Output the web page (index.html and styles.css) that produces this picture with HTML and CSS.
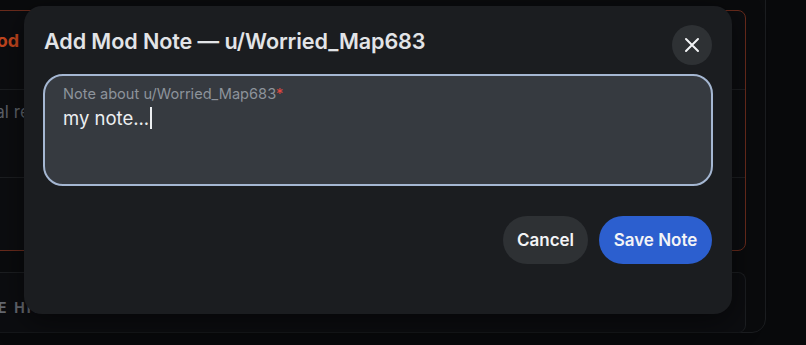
FILE: index.html
```html
<!DOCTYPE html>
<html lang="en">
<head>
<meta charset="utf-8">
<title>Add Mod Note</title>
<link rel="stylesheet" href="styles.css">
</head>
<body>
<div class="panel">
  <section class="card card-active">
    <div class="card-head">Mod Note</div>
    <div class="card-row">Optional reason</div>
    <div class="card-row card-row-last"></div>
  </section>
  <section class="card card-history">
    <div class="history-title">NOTE HISTORY</div>
  </section>
</div>

<div class="modal" role="dialog" aria-label="Add Mod Note">
  <div class="modal-head">
    <h2 class="modal-title">Add Mod Note — u/Worried_Map683</h2>
    <button class="close-btn" aria-label="Close">
      <svg width="18" height="18" viewBox="0 0 18 18" fill="none" stroke="#f1f3f5" stroke-width="2" stroke-linecap="round">
        <path d="M3 3L15 15M15 3L3 15"/>
      </svg>
    </button>
  </div>
  <div class="field">
    <div class="field-label">Note about u/Worried_Map683<span class="req">*</span></div>
    <div class="field-value">my note...<span class="caret"></span></div>
  </div>
  <div class="actions">
    <button class="btn btn-secondary">Cancel</button>
    <button class="btn btn-primary">Save Note</button>
  </div>
</div>
</body>
</html>
```
FILE: styles.css
```css
* { box-sizing: border-box; }
html, body {
  margin: 0;
  padding: 0;
}
body {
  width: 806px;
  height: 345px;
  overflow: hidden;
  background: #08090b;
  font-family: Inter, "Noto Sans", "Liberation Sans", sans-serif;
  position: relative;
}

/* background page */
.panel {
  margin-left: -40px;
  margin-top: -20px;
  width: 806px;
  height: 353px;
  border: 1px solid #1b1d20;
  border-radius: 0 0 14px 0;
  padding: 29px 19px 0 0;
  background: #0a0b0d;
}
.card {
  border-radius: 8px;
  background: #0c0d10;
}
.card-active {
  height: 241px;
  border: 1px solid #6a2b1c;
  display: flex;
  flex-direction: column;
}
.card-head {
  height: 79px;
  padding: 19px 0 0 18px;
  color: #c2461e;
  font-weight: 700;
  font-size: 18px;
  border-bottom: 1px solid #1c1e21;
}
.card-row {
  height: 88px;
  padding: 12px 0 0 0;
  margin-left: -20px;
  color: #5d6168;
  font-size: 17px;
  border-bottom: 1px solid #1c1e21;
}
.card-row-last {
  border-bottom: none;
  flex: 1;
  margin-left: 0;
}
.card-history {
  margin-top: 21px;
  height: 61px;
  border: 1px solid #1c1e21;
  border-bottom-color: #15171a;
  padding: 26px 0 0 0;
}
.history-title {
  margin-left: -1px;
  color: #656970;
  font-weight: 700;
  font-size: 14px;
  letter-spacing: 2.2px;
}

/* modal */
.modal {
  position: absolute;
  left: 24px;
  top: 6px;
  width: 708px;
  height: 308px;
  background: #1b1d20;
  border-radius: 18px;
  padding: 19px 19px 0 19px;
  box-shadow: 0 8px 30px rgba(0, 0, 0, 0.5);
}
.modal-head {
  height: 40px;
  display: flex;
  align-items: center;
  justify-content: space-between;
  padding-right: 1px;
}
.modal-title {
  margin: 0 0 8px 1px;
  font-size: 21.6px;
  font-weight: 600;
  color: #e2e4e7;
  letter-spacing: -0.1px;
}
.close-btn {
  width: 40px;
  height: 40px;
  border-radius: 50%;
  border: none;
  background: #2e3134;
  display: flex;
  align-items: center;
  justify-content: center;
  padding: 0;
}
.field {
  margin-top: 9px;
  height: 112px;
  border: 2px solid #a5b7d2;
  border-radius: 20px;
  background: #363a40;
  padding: 10px 18px 0 18px;
}
.field-label {
  font-size: 14.6px;
  line-height: 17px;
  color: #8d939b;
}
.req { color: #e0473f; }
.field-value {
  margin-top: 3px;
  font-size: 18.5px;
  line-height: 24px;
  color: #eceef1;
  display: flex;
  align-items: center;
}
.caret {
  display: inline-block;
  width: 1.5px;
  height: 22px;
  background: #eceef1;
  margin-left: 1px;
}
.actions {
  margin-top: 30px;
  display: flex;
  justify-content: flex-end;
  gap: 11px;
  padding-right: 1px;
}
.btn {
  height: 48px;
  border: none;
  border-radius: 24px;
  font-family: inherit;
  font-size: 17px;
  font-weight: 600;
  color: #f3f4f6;
  padding: 0;
}
.btn-secondary {
  width: 85px;
  background: #2e3134;
}
.btn-primary {
  width: 113px;
  background: #2c5fcf;
}
```
